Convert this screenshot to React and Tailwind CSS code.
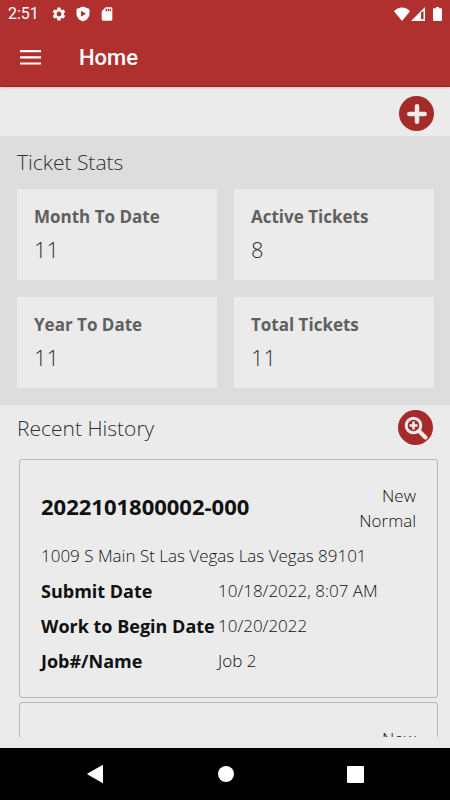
import React from "react";
import { MdSettings, MdSdCard } from "react-icons/md";

const stats = [
  { label: "Month To Date", value: 11 },
  { label: "Active Tickets", value: 8 },
  { label: "Year To Date", value: 11 },
  { label: "Total Tickets", value: 11 },
];

const tickets = [
  {
    number: "2022101800002-000",
    status: "New",
    priority: "Normal",
    address: "1009 S Main St Las Vegas Las Vegas 89101",
    details: [
      { label: "Submit Date", value: "10/18/2022, 8:07 AM" },
      { label: "Work to Begin Date", value: "10/20/2022" },
      { label: "Job#/Name", value: "Job 2" },
    ],
  },
  { status: "New", details: [] },
];

const StatusBar = () => (
  <div className="flex h-7 items-center justify-between px-2 text-white">
    <div className="flex items-center gap-2">
      <span className="mr-1 text-base leading-5">2:51</span>
      <MdSettings className="size-4" />
      <svg viewBox="0 0 16 16" className="size-4" fill="currentColor">
        <path
          fillRule="evenodd"
          d="M8 .5 14.5 3v4.6c0 3.8-2.6 6.7-6.500 7.900-3.900-1.200-6.500-4.100-6.500-7.900V3zM6 4.800v6l5-3z"
        />
      </svg>
      <MdSdCard className="size-4" />
    </div>
    <div className="flex items-center">
      <svg viewBox="0 0 16 14" className="h-3.5 w-4" fill="currentColor">
        <path d="M8 14 0 4.2C2 1.8 5 .4 8 .4s6 1.4 8 3.8z" />
      </svg>
      <svg viewBox="0 0 14 14" className="ml-px size-3.5" fill="currentColor">
        <path fillRule="evenodd" d="M14 0v14H0zM10 5.500v6.800h2.500V4z" />
      </svg>
      <svg viewBox="0 0 9 14" className="ml-2 h-3.5 w-[9px]" fill="currentColor">
        <path d="M3 0h3v1.300h2.200q.8 0 .8.8v11.100q0 .8-.8.8H.8q-.8 0-.8-.8V2.100q0-.8.8-.8H3z" />
      </svg>
    </div>
  </div>
);

const Header = () => (
  <header className="z-10 shrink-0 border-b border-[#b31a1c] bg-[#b03030] font-[Roboto,sans-serif] shadow-sm">
    <StatusBar />
    <div className="flex h-[58px] items-center px-5 pt-px">
      <button type="button" aria-label="Menu" className="text-white">
        <svg viewBox="0 0 21 16" className="h-4 w-[21px]" fill="currentColor">
          <path d="M0 0h21v2.200H0zM0 6.200h21v2.200H0zM0 12.400h21v2.200H0z" />
        </svg>
      </button>
      <h1 className="ml-[38px] text-[22px] font-medium leading-7 text-white">Home</h1>
    </div>
  </header>
);

const RoundButton = ({ label, children }) => (
  <button
    type="button"
    aria-label={label}
    className="flex size-[35px] items-center justify-center rounded-full bg-[#a52a2a] text-[#ebebeb]"
  >
    {children}
  </button>
);

const StatCard = ({ label, value }) => (
  <div className="bg-[#ebebeb] px-[17px] py-4">
    <h3 className="text-[17px] font-bold leading-6 text-[#606060]">{label}</h3>
    <p className="mt-[5px] text-[22px] font-light leading-[30px] text-[#303030]">{value}</p>
  </div>
);

const TicketCard = ({ ticket }) => (
  <article className="rounded-[3px] border border-[#b8b8b8] px-[21px] pb-[21px] pt-[23px]">
    <div className="flex items-center justify-between">
      <h3 className="pb-1 text-[22px] font-bold leading-6">{ticket.number}</h3>
      <div className="text-right text-[17px] font-light leading-[25px]">
        <p>{ticket.status}</p>
        <p>{ticket.priority}</p>
      </div>
    </div>
    <p className="mt-2 text-[17px] font-light leading-[30px]">{ticket.address}</p>
    <dl>
      {ticket.details.map((row) => (
        <div key={row.label} className="mt-[5px] flex items-center leading-[30px]">
          <dt className="w-[177px] shrink-0 whitespace-nowrap text-[18px] font-bold">{row.label}</dt>
          <dd className="text-[17px] font-light">{row.value}</dd>
        </div>
      ))}
    </dl>
  </article>
);

const NavBar = () => (
  <nav className="flex h-[52px] shrink-0 items-center justify-around bg-black px-[30px] text-white">
    <button type="button" aria-label="Back">
      <svg viewBox="0 0 18 18" className="size-[18px]" fill="currentColor">
        <path d="M16 .2v17.600q0 .4-.5.1L.6 9.500q-.6-.5 0-1L15.500.1q.5-.3.5.1z" />
      </svg>
    </button>
    <button type="button" aria-label="Home" className="size-4 rounded-full bg-white" />
    <button type="button" aria-label="Recent apps" className="size-[17px] rounded-[1px] bg-white" />
  </nav>
);

const App = () => {
  return (
    <div className="flex h-screen flex-col bg-[#ebebeb] font-['Open_Sans','Noto_Sans',sans-serif] text-[#111111]">
      <Header />
      <main className="flex min-h-0 flex-1 flex-col pb-[11px]">
        <div className="flex h-[49px] shrink-0 items-center justify-end px-4 pt-1">
          <RoundButton label="New ticket">
            <svg viewBox="0 0 20 20" className="size-5" stroke="currentColor" strokeWidth="4.500" strokeLinecap="round">
              <path d="M10 2.300v15.400M2.300 10h15.400" />
            </svg>
          </RoundButton>
        </div>

        <section className="shrink-0 bg-[#dddddd] pb-[17px] pl-[17px] pr-4 pt-[11px]">
          <h2 className="text-[21px] font-light leading-[30px] text-[#303030]">Ticket Stats</h2>
          <div className="mt-3 grid grid-cols-2 gap-[17px]">
            {stats.map((stat) => (
              <StatCard key={stat.label} label={stat.label} value={stat.value} />
            ))}
          </div>
        </section>

        <section className="flex min-h-0 flex-1 flex-col">
          <div className="flex h-[45px] shrink-0 items-center justify-between px-[17px]">
            <h2 className="text-[21px] font-light leading-[30px] text-[#303030]">Recent History</h2>
            <RoundButton label="Search tickets">
              <svg viewBox="0 0 24 24" className="size-6" fill="none" stroke="currentColor">
                <circle cx="9.500" cy="9.500" r="7.300" strokeWidth="3" />
                <path d="M15 15l6.500 6.500" strokeWidth="4" strokeLinecap="round" />
                <path d="M9.500 5.500v8M5.500 9.500h8" strokeWidth="2.600" />
              </svg>
            </RoundButton>
          </div>
          <div className="mt-[9px] flex min-h-0 flex-1 flex-col overflow-hidden pl-[19px] pr-3">
            <div className="flex flex-col gap-1">
              {tickets.map((ticket, i) => (
                <TicketCard key={i} ticket={ticket} />
              ))}
            </div>
          </div>
        </section>
      </main>
      <NavBar />
    </div>
  );
};

export default App;
